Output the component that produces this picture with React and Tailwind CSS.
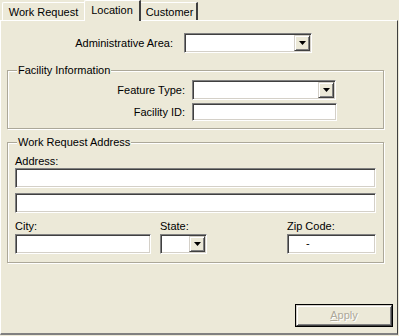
import React from "react";

const sunken =
  "border border-t-[#808080] border-l-[#808080] border-b-white border-r-white shadow-[inset_1px_1px_0_#404040,inset_-1px_-1px_0_#d4d0c8] bg-white";
const raised =
  "border border-t-[#d4d0c8] border-l-[#d4d0c8] border-b-[#404040] border-r-[#404040] shadow-[inset_1px_1px_0_#ffffff,inset_-1px_-1px_0_#808080] bg-[#ece9d8]";

function Arrow() {
  return (
    <div className={`${raised} w-[16px] h-[16px] flex items-center justify-center`}>
      <svg width="7" height="4" viewBox="0 0 7 4">
        <path d="M0 0h7L3.5 4z" fill="#000" />
      </svg>
    </div>
  );
}

function Combo({ w }) {
  return (
    <div className={`${sunken} h-[20px] flex justify-end items-center pr-[1px]`} style={{ width: w }}>
      <Arrow />
    </div>
  );
}

function Field({ w, h = 20, children }) {
  return (
    <div className={`${sunken} flex items-center`} style={{ width: w, height: h }}>
      {children}
    </div>
  );
}

function Group({ title, className, children }) {
  return (
    <div
      className={`relative border border-[#aca899] shadow-[inset_1px_1px_0_#ffffff,1px_1px_0_#ffffff] ${className}`}
    >
      <span className="absolute -top-[8px] left-[9px] bg-[#ece9d8] px-[1px] leading-[14px]">{title}</span>
      {children}
    </div>
  );
}

export default function App() {
  return (
    <div
      className="w-[399px] h-[336px] bg-[#ece9d8] text-[11px] text-black overflow-hidden"
      style={{ fontFamily: '"Liberation Sans", Arial, sans-serif' }}
    >
      {/* tabs */}
      <div className="flex items-end h-[20px] pl-[2px]">
        <div className="h-[18px] w-[83px] border-t border-l border-white border-r border-r-[#808080] flex items-center justify-center pt-[1px] rounded-tl-[2px]">
          Work Request
        </div>
        <div className="relative z-10 h-[21px] w-[57px] border-t border-l border-white border-r-2 border-r-[#404040] bg-[#ece9d8] flex items-center justify-center -mb-[1px] -ml-[1px] pb-[2px] rounded-tl-[2px]">
          Location
        </div>
        <div className="h-[18px] w-[57px] border-t border-white border-r-2 border-r-[#404040] flex items-center justify-center pt-[1px] pl-[2px]">
          Customer
        </div>
      </div>

      {/* page */}
      <div className="h-[315px] w-[398px] border-t border-l border-white border-r border-r-[#404040] border-b-2 border-b-[#808080] flex flex-col">
        <div className="flex items-center mt-[12px]">
          <div className="w-[172px] text-right">Administrative Area:</div>
          <div className="ml-[11px]">
            <Combo w={128} />
          </div>
        </div>

        <Group title="Facility Information" className="ml-[6px] mt-[17px] w-[377px] h-[59px]">
          <div className="flex items-center mt-[9px]">
            <div className="w-[177px] text-right">Feature Type:</div>
            <div className="ml-[7px]">
              <Combo w={144} />
            </div>
          </div>
          <div className="flex items-center mt-[3px]">
            <div className="w-[177px] text-right">Facility ID:</div>
            <div className="ml-[7px]">
              <Field w={145} h={18} />
            </div>
          </div>
        </Group>

        <Group title="Work Request Address" className="ml-[6px] mt-[13px] w-[377px] h-[121px]">
          <div className="pl-[7px] mt-[11px] leading-[14px]">Address:</div>
          <div className="pl-[7px] flex flex-col gap-[5px]">
            <Field w={361} />
            <Field w={361} />
          </div>
          <div className="flex pl-[7px] mt-[6px]">
            <div className="flex flex-col">
              <div className="leading-[14px] mb-[1px]">City:</div>
              <Field w={136} />
            </div>
            <div className="flex flex-col ml-[9px]">
              <div className="leading-[14px] mb-[1px]">State:</div>
              <Combo w={47} />
            </div>
            <div className="flex flex-col ml-[80px]">
              <div className="leading-[14px] mb-[1px]">Zip Code:</div>
              <Field w={89}>
                <span className="ml-[18px] -mt-[2px]">-</span>
              </Field>
            </div>
          </div>
        </Group>

        <div className="flex justify-end mt-[41px] pr-[4px]">
          <div className="w-[98px] h-[23px] border border-black">
            <div className={`${raised} w-full h-full flex items-center justify-center text-[#aca899] [text-shadow:1px_1px_0_#ffffff]`}>
              <span>
                <span className="underline">A</span>pply
              </span>
            </div>
          </div>
        </div>
      </div>
    </div>
  );
}
